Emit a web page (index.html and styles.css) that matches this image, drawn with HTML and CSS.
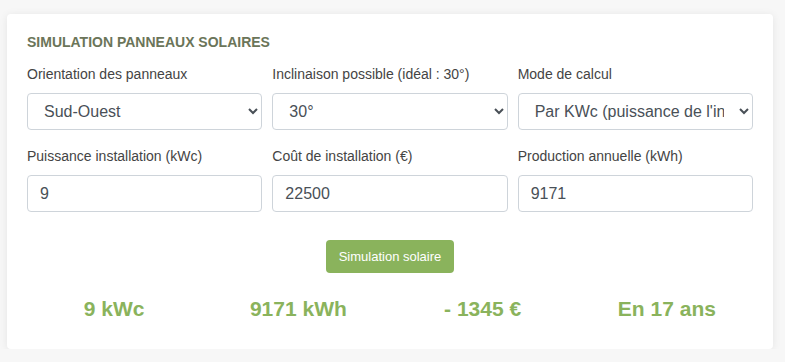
FILE: index.html
```html
<!DOCTYPE html>
<html lang="fr">
<head>
  <meta charset="UTF-8">
  <meta name="viewport" content="width=device-width, initial-scale=1.0">
  <title>Simulation panneaux solaires</title>
  <link rel="stylesheet" href="styles.css">
</head>
<body>

  <div class="card">
    <h5 class="card-title">Simulation panneaux solaires</h5>

    <div class="form-row">
      <div class="field">
        <label for="orientation">Orientation des panneaux</label>
        <select id="orientation" class="control">
          <option>Sud-Ouest</option>
        </select>
      </div>
      <div class="field">
        <label for="inclinaison">Inclinaison possible (idéal : 30°)</label>
        <select id="inclinaison" class="control">
          <option>30°</option>
        </select>
      </div>
      <div class="field">
        <label for="mode">Mode de calcul</label>
        <select id="mode" class="control">
          <option>Par KWc (puissance de l'installation)</option>
        </select>
      </div>
    </div>

    <div class="form-row">
      <div class="field">
        <label for="puissance">Puissance installation (kWc)</label>
        <input id="puissance" class="control" type="text" value="9">
      </div>
      <div class="field">
        <label for="cout">Coût de installation (€)</label>
        <input id="cout" class="control" type="text" value="22500">
      </div>
      <div class="field">
        <label for="production">Production annuelle (kWh)</label>
        <input id="production" class="control" type="text" value="9171">
      </div>
    </div>

    <div class="actions">
      <button class="btn">Simulation solaire</button>
    </div>

    <!-- Résultats -->
    <div class="results">
      <div class="result">9 kWc</div>
      <div class="result">9171 kWh</div>
      <div class="result">- 1345 €</div>
      <div class="result">En 17 ans</div>
    </div>
  </div>

</body>
</html>
```

FILE: styles.css
```css
/* Page */
body {
  font-family: "Liberation Sans", Arial, sans-serif;
  margin: 0;
  padding: 14px 12px 0 7px;
  background-color: #f7f7f7;
  color: #444;
}

.card {
  background-color: #fff;
  border-radius: 4px;
  box-shadow: 0 1px 8px rgba(0, 0, 0, 0.08);
  padding: 20px 20px 28px;
}

.card-title {
  margin: 0 0 16px;
  font-size: 14px;
  line-height: 16px;
  font-weight: bold;
  text-transform: uppercase;
  color: #6b7559;
}

.form-row {
  display: grid;
  grid-template-columns: repeat(3, 1fr);
  gap: 10px;
  margin-bottom: 18px;
}

.field label {
  display: block;
  font-size: 14px;
  line-height: 16px;
  color: #444;
  margin-bottom: 11px;
}

.control {
  display: block;
  width: 100%;
  box-sizing: border-box;
  height: 37px;
  padding: 6px 12px;
  font-family: inherit;
  font-size: 16px;
  color: #495057;
  background-color: #fff;
  border: 1px solid #ced4da;
  border-radius: 4px;
}

.actions {
  text-align: center;
  margin-top: 28px;
}

.btn {
  background-color: #8ab35c;
  color: white;
  font-family: inherit;
  font-size: 13px;
  padding: 0 13px;
  height: 33px;
  border: none;
  border-radius: 4px;
  cursor: pointer;
}

.results {
  display: grid;
  grid-template-columns: repeat(4, 1fr);
  margin: 24px -6px 0 -5px;
  text-align: center;
}

.result {
  font-size: 21px;
  line-height: 24px;
  font-weight: bold;
  color: #8ab35c;
}
```
